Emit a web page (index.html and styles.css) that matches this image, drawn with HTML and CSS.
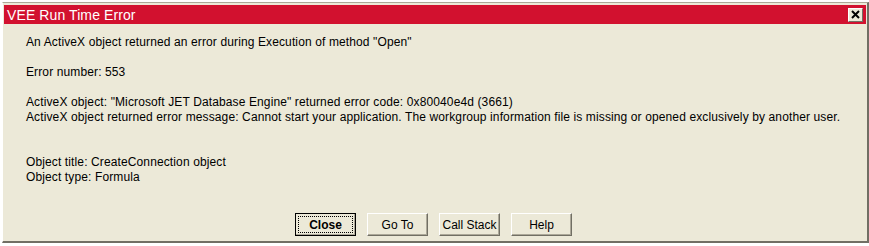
FILE: index.html
```html
<!DOCTYPE html>
<html lang="en">

<head>
    <meta charset="UTF-8">
    <title>VEE Run Time Error</title>
    <link rel="stylesheet" href="styles.css">
</head>

<body>
    <div class="window">
        <div class="titlebar">
            <span class="title">VEE Run Time Error</span>
            <button class="close-x" aria-label="Close">
                <svg width="9" height="9" viewBox="0 0 9 9">
                    <path d="M1 1 L8 8 M8 1 L1 8" stroke="#000" stroke-width="2" />
                </svg>
            </button>
        </div>

        <div class="message">
            <p>An ActiveX object returned an error during Execution of method "Open"</p>
            <p class="blank"></p>
            <p>Error number: 553</p>
            <p class="blank"></p>
            <p>ActiveX object: "Microsoft JET Database Engine" returned error code: 0x80040e4d (3661)</p>
            <p>ActiveX object returned error message: Cannot start your application. The workgroup information file is missing or opened exclusively by another user.</p>
            <p class="blank"></p>
            <p class="blank"></p>
            <p>Object title: CreateConnection object</p>
            <p>Object type: Formula</p>
        </div>

        <div class="buttons">
            <button class="btn default">Close</button>
            <button class="btn">Go To</button>
            <button class="btn">Call Stack</button>
            <button class="btn">Help</button>
        </div>
    </div>
</body>

</html>
```

FILE: styles.css
```css
body {
    margin: 0;
    background: #fff;
    font-family: 'Liberation Sans', Arial, sans-serif;
    font-size: 12px;
}

.window {
    width: 863px;
    height: 236px;
    margin: 2px 0 0 2px;
    background: #ece9d8;
    border-top: 1px solid #aca899;
    border-left: 1px solid #fff;
    border-right: 2px solid #716f64;
    border-bottom: 2px solid #716f64;
    padding: 2px 0 0 1px;
    display: flex;
    flex-direction: column;
}

.titlebar {
    height: 19px;
    background: #d2112f;
    color: #fff;
    display: flex;
    align-items: center;
    justify-content: space-between;
    padding: 0 3px 0 3px;
    margin-right: 1px;
}

.title {
    font-size: 14px;
    letter-spacing: 0.1px;
}

.close-x {
    width: 15px;
    height: 14px;
    padding: 0;
    background: #ece9d8;
    border: 1px solid;
    border-color: #fff #716f64 #716f64 #fff;
    display: flex;
    align-items: center;
    justify-content: center;
}

.message {
    padding: 11px 0 0 22px;
    color: #000;
    letter-spacing: 0.12px;
}

.message p {
    margin: 0;
    height: 15px;
    line-height: 15px;
    white-space: nowrap;
}

.buttons {
    margin-top: auto;
    margin-bottom: 5px;
    display: flex;
    justify-content: center;
    gap: 11px;
    padding-right: 4px;
}

.btn {
    width: 61px;
    height: 23px;
    padding: 0;
    font-family: inherit;
    font-size: 12px;
    color: #000;
    background: #ece9d8;
    border: 1px solid;
    border-color: #fff #716f64 #716f64 #fff;
    box-shadow: inset -1px -1px 0 #aca899;
}

.btn.default {
    font-weight: bold;
    border-color: #000;
    outline: 1px dotted #000;
    outline-offset: -4px;
}
```
